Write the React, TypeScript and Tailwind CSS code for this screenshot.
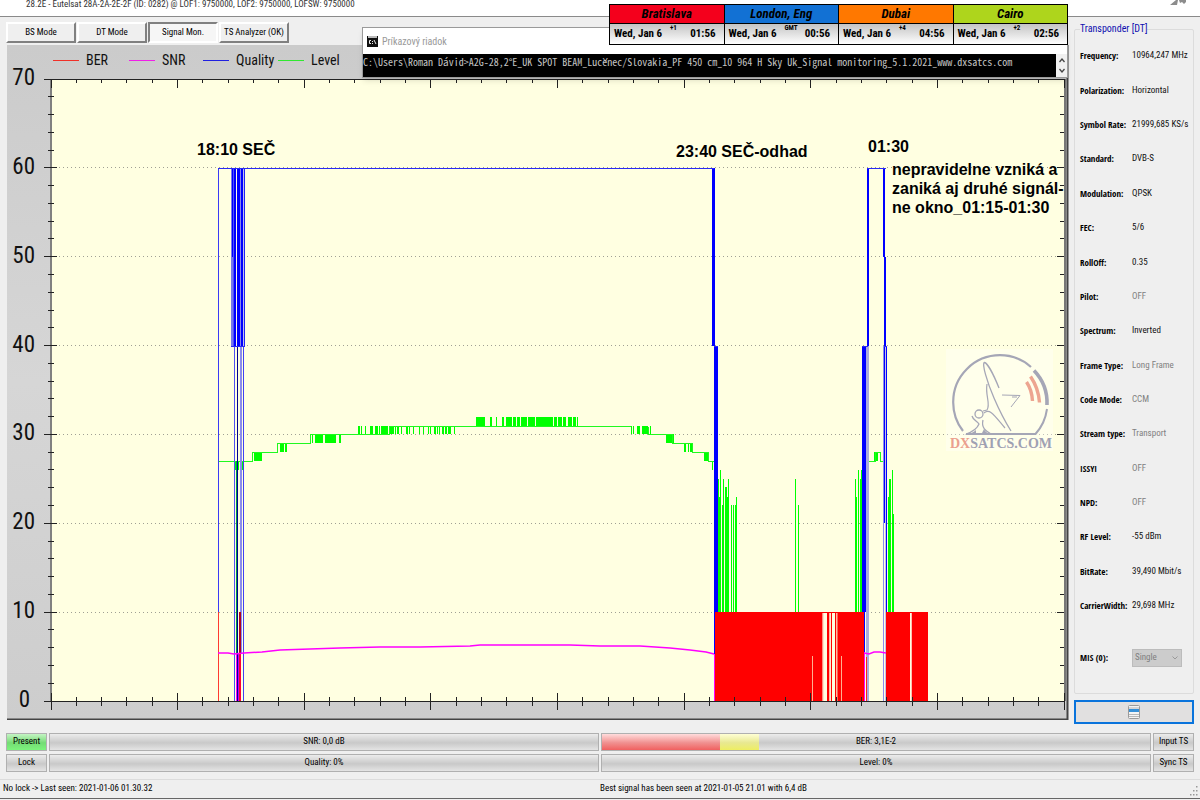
import { useState } from 'react';

const UI = "font-['Roboto_Condensed','Liberation_Sans',sans-serif]";
const LABEL = "font-['Open_Sans_Condensed','Liberation_Sans',sans-serif] font-bold text-black";
const CHART_FONT = "'Roboto Condensed', 'Liberation Sans', sans-serif";

const TABS = ['BS Mode', 'DT Mode', 'Signal Mon.', 'TS Analyzer (OK)'];

const CLOCKS = [
  { city: 'Bratislava', date: 'Wed, Jan 6', offset: '+1', time: '01:56', color: 'bg-[#f4001c]' },
  { city: 'London, Eng', date: 'Wed, Jan 6', offset: 'GMT', time: '00:56', color: 'bg-[#1271d4]' },
  { city: 'Dubai', date: 'Wed, Jan 6', offset: '+4', time: '04:56', color: 'bg-[#ff7800]' },
  { city: 'Cairo', date: 'Wed, Jan 6', offset: '+2', time: '02:56', color: 'bg-[#aed51c]' },
];

const PARAMS: { label: string; value: string; muted?: boolean }[] = [
  { label: 'Frequency:', value: '10964,247 MHz' },
  { label: 'Polarization:', value: 'Horizontal' },
  { label: 'Symbol Rate:', value: '21999,685 KS/s' },
  { label: 'Standard:', value: 'DVB-S' },
  { label: 'Modulation:', value: 'QPSK' },
  { label: 'FEC:', value: '5/6' },
  { label: 'RollOff:', value: '0.35' },
  { label: 'Pilot:', value: 'OFF', muted: true },
  { label: 'Spectrum:', value: 'Inverted' },
  { label: 'Frame Type:', value: 'Long Frame', muted: true },
  { label: 'Code Mode:', value: 'CCM', muted: true },
  { label: 'Stream type:', value: 'Transport', muted: true },
  { label: 'ISSYI', value: 'OFF', muted: true },
  { label: 'NPD:', value: 'OFF', muted: true },
  { label: 'RF Level:', value: '-55 dBm' },
  { label: 'BitRate:', value: '39,490 Mbit/s' },
  { label: 'CarrierWidth:', value: '29,698 MHz' },
];

const LEGEND = [
  { name: 'BER', color: '#f03028', x: 53 },
  { name: 'SNR', color: '#f020e8', x: 129 },
  { name: 'Quality', color: '#2020e0', x: 203 },
  { name: 'Level', color: '#30e830', x: 278 },
];

// Chart geometry
const LEFT = 51;
const RIGHT = 1064;
const TOP = 79;
const BOTTOM = 701;
const yOf = (v: number) => BOTTOM - (v * (BOTTOM - TOP)) / 70;

// [x, width] of the spots where the level flips between two neighbouring steps
const FLICKER: { lo: number; hi: number; bars: [number, number][] }[] = [
  { lo: 26, hi: 27, bars: [[235, 4], [240, 3], [712, 1], [866, 2]] },
  { lo: 27, hi: 28, bars: [[252, 1], [254, 2], [256, 6], [704, 4], [708, 1], [867, 1], [874, 4], [880, 1]] },
  { lo: 28, hi: 29, bars: [[277, 1], [280, 4], [285, 2], [684, 2], [688, 1], [690, 2]] },
  { lo: 29, hi: 30, bars: [[310, 1], [312, 1], [315, 8], [325, 11], [339, 2], [666, 6], [673, 1]] },
  {
    lo: 30,
    hi: 31,
    bars: [
      [358, 2], [361, 1], [365, 1], [370, 3], [375, 3], [379, 1], [381, 7], [390, 4], [395, 1],
      [397, 2], [401, 1], [406, 2], [409, 1], [413, 1], [419, 1], [423, 1], [428, 1], [430, 1],
      [434, 2], [437, 1], [439, 1], [442, 2], [445, 2], [448, 3], [454, 1], [631, 1], [633, 1],
      [637, 3], [642, 6], [650, 1],
    ],
  },
  {
    lo: 31,
    hi: 32,
    bars: [
      [476, 9], [490, 2], [496, 1], [502, 2], [506, 6], [513, 3], [517, 3], [521, 6], [528, 7],
      [536, 17], [554, 3], [558, 4], [563, 3], [568, 4], [573, 3], [577, 1],
    ],
  },
];

// [x, width, top] of level peaks rising from the BER block
const PEAKS: [number, number, number][] = [
  [718, 1, 479], [719, 1, 497], [720, 1, 470], [722, 1, 505], [723, 1, 479], [725, 1, 487],
  [726, 1, 487], [727, 2, 497], [728, 1, 479], [731, 1, 505], [733, 1, 505], [735, 1, 505],
  [736, 1, 497], [795, 1, 479], [798, 1, 505], [855, 1, 479], [856, 1, 497], [858, 1, 470],
  [860, 2, 479], [861, 2, 470], [888, 1, 497], [889, 1, 479], [890, 1, 479], [892, 1, 470],
  [893, 1, 514],
];

const BER_GAPS: { x: number; w: number; top: number; color: string }[] = [
  { x: 812, w: 1, top: 656, color: '#ffb090' },
  { x: 822, w: 1, top: 613, color: '#ff9080' },
  { x: 823, w: 1, top: 613, color: '#ffe0c8' },
  { x: 824, w: 3, top: 613, color: '#ffffe1' },
  { x: 829, w: 1, top: 613, color: '#ffb8a0' },
  { x: 830, w: 1, top: 613, color: '#ffe8d0' },
  { x: 832, w: 3, top: 613, color: '#ffffe1' },
  { x: 836, w: 1, top: 613, color: '#ffb8a0' },
  { x: 837, w: 1, top: 613, color: '#ff6050' },
  { x: 841, w: 1, top: 656, color: '#ffb090' },
  { x: 910, w: 1, top: 613, color: '#ffffe1' },
  { x: 911, w: 1, top: 613, color: '#ffc0b0' },
];

// [x, top, bottom, width, colour]
const QUALITY: [number, number, number, number, string][] = [
  [218, 168, 612, 1, '#3b3bf5'],
  [231, 168, 346, 2, '#7878ee'],
  [232, 168, 257, 2, '#0000ff'],
  [233, 168, 346, 1, '#5050f4'],
  [234, 168, 346, 2, '#0000ff'],
  [237, 168, 346, 3, '#0000ff'],
  [240, 168, 346, 1, '#8888ee'],
  [241, 168, 346, 2, '#0000ff'],
  [243, 168, 346, 1, '#c0c0ea'],
  [244, 168, 346, 1, '#2020f8'],
  [234, 346, 701, 1, '#5050f0'],
  [236, 461, 654, 1, '#00a040'],
  [237, 346, 701, 1, '#000090'],
  [240, 346, 654, 2, '#8c8cec'],
  [243, 346, 701, 1, '#4040f4'],
  [712, 168, 346, 3, '#0000ff'],
  [714, 346, 612, 4, '#0000ff'],
  [714, 612, 654, 1, '#0000ff'],
  [867, 168, 346, 2, '#0000ff'],
  [862, 346, 612, 4, '#0000ff'],
  [866, 346, 701, 3, '#aaaade'],
  [883, 168, 257, 2, '#0000ff'],
  [884, 257, 523, 2, '#0000ff'],
  [883, 346, 701, 1, '#8c8cec'],
  [885, 346, 701, 1, '#c4c4e2'],
  [886, 346, 612, 1, '#0000ff'],
];

const LEVEL_LINE =
  'M218 461H252V452H277V443H310V434H358M389 434V426H631M358 434H389M648 426V434H666V434H672V443H692V452H708V461H714M866 461H875V452H880V461H887';

const SNR_LINE =
  'M218 653L228 653L234 654L244 653L262 652L280 650L310 649L340 648L380 647L420 647L470 646L480 645L570 645L600 646L640 646L670 648L690 650L706 652L714 654';

function Ticks() {
  const items = [];
  for (let i = 0; i <= 40; i++) {
    const x = LEFT + ((RIGHT - LEFT) * i) / 40;
    const major = i % 5 === 0;
    items.push(
      <path
        key={`x${i}`}
        d={`M${x} ${TOP}v${major ? 9 : 4}M${x} ${major ? 693 : 697}V${major ? 710 : 706}`}
      />,
    );
  }
  for (let i = 0; i <= 35; i++) {
    const y = yOf(i * 2);
    const major = i % 5 === 0;
    items.push(
      <path
        key={`y${i}`}
        d={`M${major ? 44 : 48} ${y}H${major ? 57 : 54}M${major ? 1057 : 1060} ${y}H${RIGHT}`}
      />,
    );
  }
  return (
    <g stroke="#222" strokeWidth="1" fill="none" shapeRendering="crispEdges">
      {items}
    </g>
  );
}

function DishLogo() {
  return (
    <g>
      <rect x="946" y="349" width="107" height="102" fill="#fff" opacity="0.35" />
      <g fill="none" stroke="#a5a6b6">
        <path
          d="M963 431A46.800 46.800 0 0 1 953.200 402A46.800 46.800 0 0 1 1000 355.200A46.800 46.800 0 0 1 1031 367"
          strokeWidth="2.200"
        />
        <path d="M1034 370.500A47 47 0 0 1 1047 405" strokeWidth="3.600" />
        <path d="M1047 409A47 47 0 0 1 1035.500 434H966" strokeWidth="2" />
        <path
          d="M999 388C993 373 987 363 984.500 362.500C981.500 363 987 382 994 398C1000 412 1006 423 1011 431"
          strokeWidth="1.300"
        />
        <path d="M987 384C985 396 991 404 987 410L983 411" strokeWidth="1.200" />
        <path d="M984 413C990 408 994 415 1005 428" strokeWidth="1.200" />
        <path d="M1002 395L1020 395.500L1011 407M1012 397H1017" strokeWidth="1" />
        <circle cx="979" cy="414" r="4" strokeWidth="1.300" />
        <path d="M972 416C973 420 977 421 979 424C977 429 972 432 966 434" strokeWidth="1.300" />
        <path d="M983 420C981 428 986 431 991 434" strokeWidth="1.300" />
      </g>
      <path d="M964 435C970 434 974 432 976 430V433H982L984 429C985 432 989 434 993 435Z" fill="#a5a6b6" />
      <g fill="none" stroke="#eda590" strokeWidth="3.400">
        <path d="M1026.500 382Q1032 390 1032.500 401" />
        <path d="M1030.500 376.500Q1038.500 388 1039.500 402.500" />
      </g>
      <text
        x="950"
        y="448"
        fontSize="14"
        fontWeight="700"
        fontFamily="'Liberation Serif', serif"
        fill="#9fa1b3"
      >
        <tspan fill="#eba08e">DX</tspan>SATCS.COM
      </text>
    </g>
  );
}

function SignalChart() {
  return (
    <svg viewBox="6 45 1063 675" className="block h-auto w-full" role="img" aria-label="Signal Mon.">
      <defs>
        <linearGradient id="panel" x1="0" y1="0" x2="0" y2="1">
          <stop offset="0" stopColor="#cbcbcb" />
          <stop offset="0.5" stopColor="#d6d6d6" />
          <stop offset="1" stopColor="#cdcdcd" />
        </linearGradient>
      </defs>
      <rect x="7" y="45" width="1061" height="675" fill="url(#panel)" />
      <path d="M7 719.500H1068M1067.500 45V720" stroke="#444" strokeWidth="2" fill="none" />
      <rect x={LEFT} y={TOP} width={RIGHT - LEFT} height={BOTTOM - TOP} fill="#ffffe1" />

      <g fontSize="14" fontFamily={CHART_FONT} fill="#111">
        {LEGEND.map((item) => (
          <g key={item.name}>
            <path d={`M${item.x} 60H${item.x + 26}`} stroke={item.color} strokeWidth="1" shapeRendering="crispEdges" />
            <text x={item.x + 33} y="65">
              {item.name}
            </text>
          </g>
        ))}
      </g>
      <g fontSize="23" fontFamily={CHART_FONT} fill="#111" textAnchor="end">
        {[0, 10, 20, 30, 40, 50, 60, 70].map((v) => (
          <text key={v} x={v === 0 ? 30 : 35} y={yOf(v) + 6}>
            {v}
          </text>
        ))}
      </g>

      {/* Grid */}
      <g stroke="#a0a094" strokeWidth="1" strokeDasharray="1 3" shapeRendering="crispEdges">
        {[10, 20, 30, 40, 50, 60].map((v) => (
          <path key={v} d={`M${LEFT} ${yOf(v)}H${RIGHT}`} />
        ))}
      </g>

      <g shapeRendering="crispEdges">
        {/* Level */}
        <g fill="#00ff00">
          {FLICKER.map((f) =>
            f.bars.map(([x, w]) => (
              <rect key={`${f.lo}-${x}`} x={x} y={yOf(f.hi)} width={w} height={yOf(f.lo) - yOf(f.hi)} />
            )),
          )}
          {PEAKS.map(([x, w, top]) => (
            <rect key={`p${x}`} x={x} y={top} width={w} height={612 - top} />
          ))}
        </g>
        <path d={LEVEL_LINE} transform="translate(0 0.5)" stroke="#20f820" fill="none" />

        {/* Quality */}
        {QUALITY.map(([x, top, bottom, w, color]) => (
          <rect key={`${x}-${top}`} x={x} y={top} width={w} height={bottom - top} fill={color} />
        ))}
        <path
          d="M218 168H714M867 168H886M231 346H245M714 346H718M862 346H868M884 346H887"
          stroke="#2a2af4"
          strokeWidth="1"
        />

        {/* BER */}
        <rect x="218" y="612" width="1" height="89" fill="#ff3a30" />
        <rect x="239" y="612" width="2" height="42" fill="#b00020" />
        <rect x="239" y="654" width="2" height="47" fill="#ff0030" />
        <rect x="715" y="612" width="149" height="89" fill="#ff0000" />
        <rect x="866" y="657" width="1" height="44" fill="#ff2020" />
        <rect x="886" y="612" width="42" height="89" fill="#ff0000" />
        {BER_GAPS.map((g) => (
          <rect key={g.x} x={g.x} y={g.top} width={g.w} height={BOTTOM - g.top} fill={g.color} />
        ))}
        <rect x="864" y="612" width="1" height="40" fill="#0000ff" />

        {/* SNR */}
        <g fill="#ff00ff">
          <rect x="236" y="654" width="1" height="47" />
          <rect x="238" y="654" width="1" height="47" fill="#c000ff" />
          <rect x="714" y="654" width="1" height="47" />
          <rect x="864" y="652" width="1" height="49" />
        </g>
      </g>
      <g stroke="#ff00ff" strokeWidth="1.500" fill="none">
        <path d={SNR_LINE} />
        <path d="M864 653L869 654L874 652L880 652L886 653" />
      </g>

      <path d={`M${LEFT} ${TOP}V${BOTTOM}`} stroke="#808080" strokeWidth="2" />
      <path d={`M${RIGHT + 1} ${TOP}V${BOTTOM}`} stroke="#777" strokeWidth="2" />
      <path d={`M44 ${TOP}H${RIGHT}M44 ${BOTTOM}H${RIGHT}`} stroke="#222" strokeWidth="1" shapeRendering="crispEdges" />
      <Ticks />

      <DishLogo />

      <g fontSize="16" fontWeight="700" fontFamily="'Liberation Sans', sans-serif" fill="#000">
        <text x="197" y="155">18:10 SEČ</text>
        <text x="676" y="157">23:40 SEČ-odhad</text>
        <text x="868" y="152">01:30</text>
        <text x="892" y="175">nepravidelne vzniká a</text>
        <text x="892" y="194">zaniká aj druhé signál-</text>
        <text x="892" y="213">ne okno_01:15-01:30</text>
      </g>
    </svg>
  );
}

function CommandWindow() {
  return (
    <section className="absolute top-[27px] right-[132px] left-[362px] border border-[#9a9a9a] bg-white shadow-md">
      <header className="flex h-[26px] items-center gap-1 pl-1 text-[10px] text-[#999]">
        <svg viewBox="0 0 11 11" className="size-[11px]" aria-hidden="true">
          <rect width="11" height="11" fill="#111" />
          <rect x="1" y="0" width="9" height="2" fill="#bbb" />
          <path d="M4 4.500H2.500V7.500H4M5.500 5v1M5.500 7v1M7 4L9 8" stroke="#eee" fill="none" />
        </svg>
        <span>Príkazový riadok</span>
      </header>
      <div className="flex h-[23px] bg-black">
        <p className="flex-1 overflow-hidden font-['Noto_Sans_Mono_CJK_SC','Liberation_Mono',monospace] text-[10px] leading-4 whitespace-nowrap text-[#c4c4c4]">
          C:\Users\Roman Dávid&gt;A2G-28,2°E_UK SPOT BEAM_Lučenec/Slovakia_PF 450 cm_10 964 H Sky
          Uk_Signal monitoring_5.1.2021_www.dxsatcs.com
        </p>
        <div className="flex w-[11px] flex-col items-center justify-between bg-[#f0f0f0] py-1">
          <svg viewBox="0 0 6 5" className="h-[5px] w-[6px]" aria-hidden="true">
            <path d="M0.500 4L3 1L5.500 4" stroke="#444" strokeWidth="1.300" fill="none" />
          </svg>
          <svg viewBox="0 0 6 5" className="h-[5px] w-[6px]" aria-hidden="true">
            <path d="M0.500 1L3 4L5.500 1" stroke="#444" strokeWidth="1.300" fill="none" />
          </svg>
        </div>
      </div>
    </section>
  );
}

function WorldClocks() {
  return (
    <section className="absolute top-1 right-[132px] flex w-[459px] border-t border-r border-b border-black font-bold text-black">
      {CLOCKS.map((c) => (
        <div key={c.city} className="flex-1 border-l border-black">
          <h2
            className={`${c.color} h-[19px] border-b border-black text-center text-[13px] leading-[18px] italic`}
          >
            {c.city}
          </h2>
          <div className="grid h-5 grid-cols-[56px_1fr_32px] items-center bg-linear-to-b from-[#c4c4c4] to-white pr-2 pl-1 text-[11px] whitespace-nowrap">
            <span>{c.date}</span>
            <span className="self-start text-[7px] leading-[9px]">{c.offset}</span>
            <span className="text-right">{c.time}</span>
          </div>
        </div>
      ))}
    </section>
  );
}

function TransponderPanel() {
  return (
    <aside className="flex w-[120px] shrink-0 flex-col gap-[6px] pt-[5px]">
      <fieldset className="flex min-w-0 flex-1 flex-col rounded-xs border border-[#dcdcdc] pl-[5px]">
        <legend className="text-[10px] leading-[14px] text-[#1010b0]">Transponder [DT]</legend>
        <dl className="grid flex-1 auto-rows-fr pt-[3px]">
          {PARAMS.map((p) => (
            <div key={p.label} className="flex items-center text-[9px] whitespace-nowrap">
              <dt className={`${LABEL} w-[52px] shrink-0`}>{p.label}</dt>
              <dd className={p.muted ? 'text-[#808080]' : 'text-[#111]'}>{p.value}</dd>
            </div>
          ))}
        </dl>
        <div className="flex h-[70px] items-center">
          <label htmlFor="mis" className={`${LABEL} w-[52px] text-[9px]`}>
            MIS (0):
          </label>
          <div className="relative">
            <select
              id="mis"
              disabled
              className="block h-[18px] w-[50px] appearance-none border border-[#bcbcbc] bg-[#cccccc] pl-[2px] text-[9px] text-[#808080]"
            >
              <option>Single</option>
            </select>
            <svg viewBox="0 0 6 4" className="absolute top-[7px] right-1 h-1 w-1.5" aria-hidden="true">
              <path d="M0.500 0.500L3 3L5.500 0.500" stroke="#999" fill="none" />
            </svg>
          </div>
        </div>
      </fieldset>
      <button
        aria-label="List"
        className="flex h-6 items-center justify-center border-2 border-[#0a74dc] bg-[#e1e0e0]"
      >
        <svg viewBox="0 0 12 14" className="h-[14px] w-3" aria-hidden="true">
          <rect x="0.500" y="0.500" width="11" height="13" rx="1" fill="#f4f4f4" stroke="#9a9a9a" />
          <path d="M1 9.500H11M1 11.500H11M1 3H11" stroke="#b8b8b8" />
          <rect x="1" y="4" width="10" height="3" fill="#3590d8" />
        </svg>
      </button>
    </aside>
  );
}

const METER =
  'relative flex h-[18px] items-center justify-center border border-[#b0b0b0] bg-linear-to-b from-[#ececec] via-[#c9c9c9] via-55% to-[#e4e4e4] text-[9px] whitespace-nowrap text-black';

export default function App() {
  const [active, setActive] = useState('Signal Mon.');

  return (
    <div className={`relative flex min-h-screen flex-col overflow-hidden bg-[#efefef] ${UI}`}>
      <header className="flex h-[17px] justify-between border-b border-[#8a8a8a] bg-white pr-3 pl-[26px]">
        <h1 className="text-[9px] leading-[9px] text-[#333]">
          28.2E - Eutelsat 28A-2A-2E-2F (ID: 0282) @ LOF1: 9750000, LOF2: 9750000, LOFSW: 9750000
        </h1>
        <svg viewBox="0 0 18 6" className="h-[6px] w-[18px]" aria-hidden="true">
          <path d="M0 5L6 0H8L7 5ZM9 0H16V2L14 4L12 2L10 3Z" fill="#8c8c8c" />
        </svg>
      </header>

      <main className="flex gap-[5px] px-[6px]">
        <div className="min-w-0 flex-1 pt-[5px] pb-1">
          <nav className="mb-[2px] flex h-[21px] gap-[1px]">
            {TABS.map((tab) => (
              <button
                key={tab}
                onClick={() => setActive(tab)}
                className={`w-[70px] border-2 text-[9px] whitespace-nowrap text-black ${
                  active === tab
                    ? 'border-t-[#808080] border-r-white border-b-white border-l-[#808080] bg-[#f6f6f6]'
                    : 'border-t-white border-r-[#808080] border-b-[#808080] border-l-white bg-[#efefef]'
                }`}
              >
                {tab}
              </button>
            ))}
          </nav>
          <SignalChart />
        </div>
        <TransponderPanel />
      </main>

      <footer>
        <div className="mt-[9px] grid grid-cols-[41px_1fr_1fr_41px] gap-x-[2px] gap-y-[3px] px-[6px]">
          <div className={`${METER} from-[#c4f4c4]! via-[#74dc74]! to-[#7cf47c]!`}>Present</div>
          <div className={METER}>SNR: 0,0 dB</div>
          <div className={METER}>
            <div className="absolute inset-y-0 left-0 flex w-[157px]">
              <span className="flex-3 bg-linear-to-b from-[#ffdcdc] via-[#f09090] via-55% to-[#f06060]" />
              <span className="flex-1 bg-linear-to-b from-[#ffffd4] via-[#e8e890] via-55% to-[#eeee60]" />
            </div>
            BER: 3,1E-2
          </div>
          <div className={METER}>Input TS</div>
          <div className={METER}>Lock</div>
          <div className={METER}>Quality: 0%</div>
          <div className={METER}>Level: 0%</div>
          <div className={METER}>Sync TS</div>
        </div>
        <div className="relative mt-[7px] grid h-5 grid-cols-2 items-center border-t border-b border-t-[#dcdcdc] border-b-[#666] px-[3px] text-[9px] text-black">
          <p>No lock -&gt; Last seen: 2021-01-06 01.30.32</p>
          <p>Best signal has been seen at 2021-01-05 21.01 with 6,4 dB</p>
          <svg viewBox="0 0 8 10" className="absolute right-0.5 bottom-0.5 h-[10px] w-2" aria-hidden="true">
            <path
              d="M6 0h1.500v1.500H6zM6 4h1.500v1.500H6zM3 4h1.500v1.500H3zM6 8h1.500v1.500H6zM3 8h1.500v1.500H3zM0 8h1.500v1.500H0z"
              fill="#999"
            />
          </svg>
        </div>
      </footer>

      <CommandWindow />
      <WorldClocks />
    </div>
  );
}
